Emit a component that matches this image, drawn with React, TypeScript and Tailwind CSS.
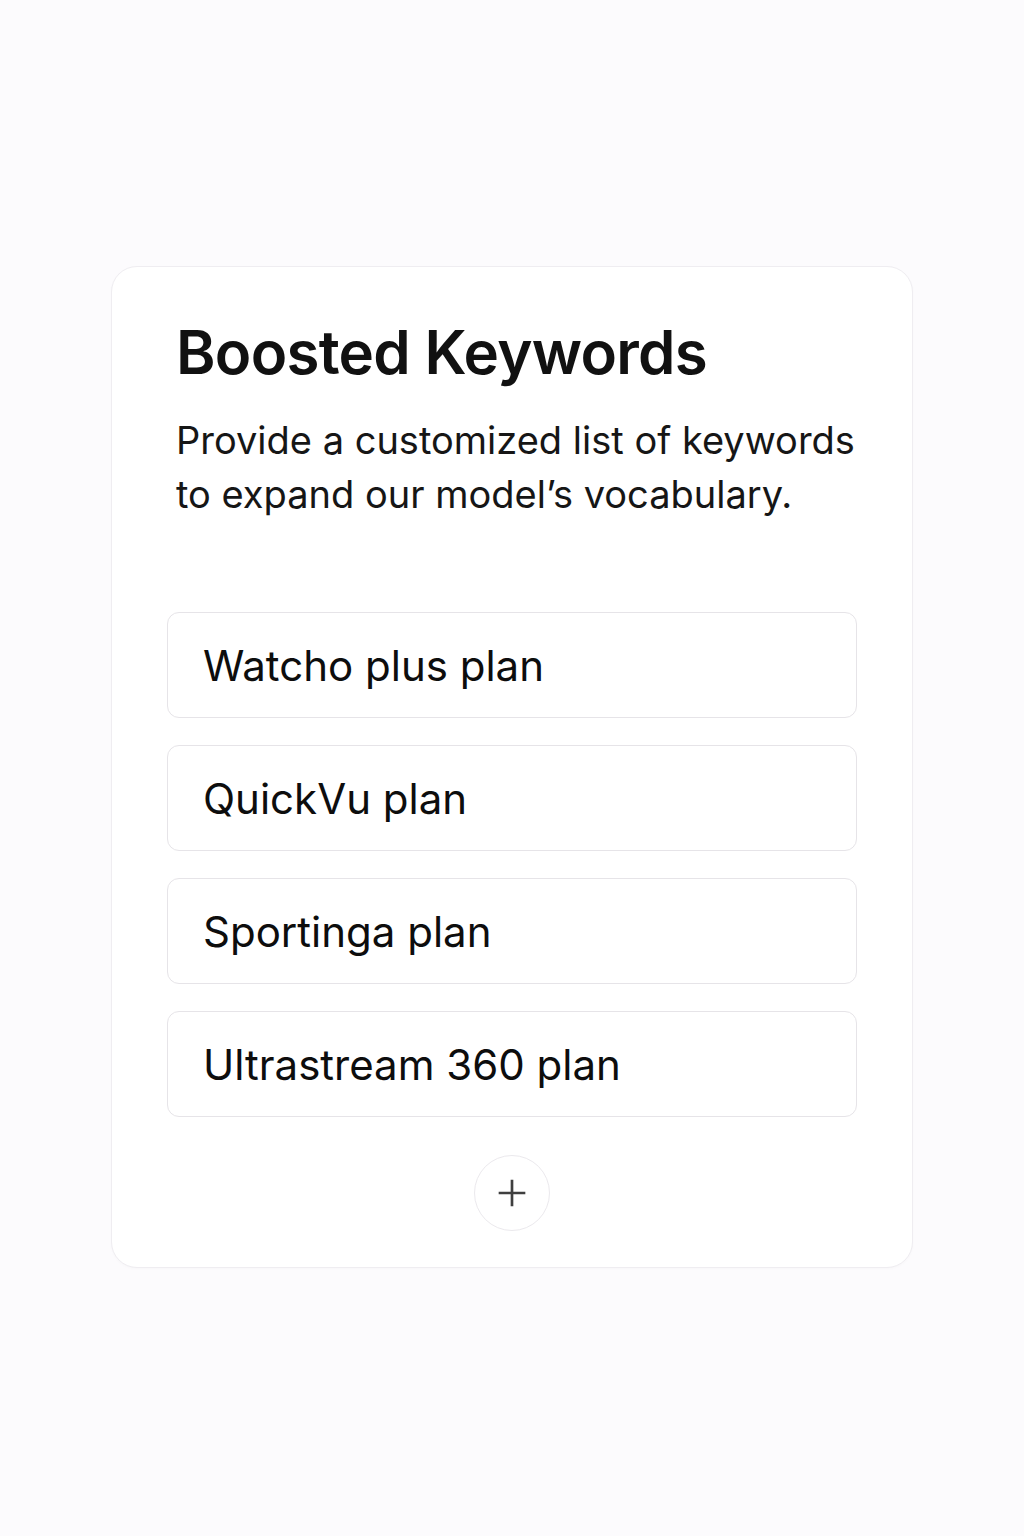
import React, { useState } from 'react';

const INITIAL_KEYWORDS = ['Watcho plus plan', 'QuickVu plan', 'Sportinga plan', 'Ultrastream 360 plan'];

const PlusIcon = ({ className }: { className?: string }) => (
  <svg viewBox="0 0 24 24" fill="none" stroke="currentColor" strokeWidth={1.6} strokeLinecap="butt" className={className}>
    <path d="M12 4v16M4 12h16" />
  </svg>
);

export default function App() {
  const [keywords, setKeywords] = useState<string[]>(INITIAL_KEYWORDS);

  const updateKeyword = (index: number, value: string) => {
    setKeywords((prev) => prev.map((k, i) => (i === index ? value : k)));
  };

  return (
    <div className="min-h-screen bg-[#fcfbfd] font-['Inter',sans-serif]">
      <div className="flex justify-center pt-[266px]">
        <div className="w-[802px] h-[1002px] rounded-[26px] border border-[#efedf1] bg-white px-[55px] pt-[50px] shadow-[0_1px_3px_rgba(0,0,0,0.02)]">
          <header className="pl-[9px]">
            <h1 className="text-[60px] leading-[70px] font-semibold tracking-[-0.012em] text-[#111]">Boosted Keywords</h1>
            <p className="mt-[26px] text-[38px] leading-[54px] text-[#161616]">
              Provide a customized list of keywords
              <br />
              to expand our model’s vocabulary.
            </p>
          </header>

          <div className="mt-[91px] flex flex-col gap-[27px]">
            {keywords.map((keyword, index) => (
              <input
                key={index}
                type="text"
                value={keyword}
                onChange={(event) => updateKeyword(index, event.target.value)}
                className="h-[106px] w-full rounded-[12px] border border-[#e6e4e8] bg-white px-[35px] text-[42px] text-[#0d0d0d] outline-none"
              />
            ))}
          </div>

          <div className="mt-[38px] flex justify-center">
            <button
              type="button"
              onClick={() => setKeywords((prev) => [...prev, ''])}
              className="flex h-[76px] w-[76px] items-center justify-center rounded-full border border-[#ebe9ed] bg-white text-[#3f3f3f]"
            >
              <PlusIcon className="h-[40px] w-[40px]" />
            </button>
          </div>
        </div>
      </div>
    </div>
  );
}
